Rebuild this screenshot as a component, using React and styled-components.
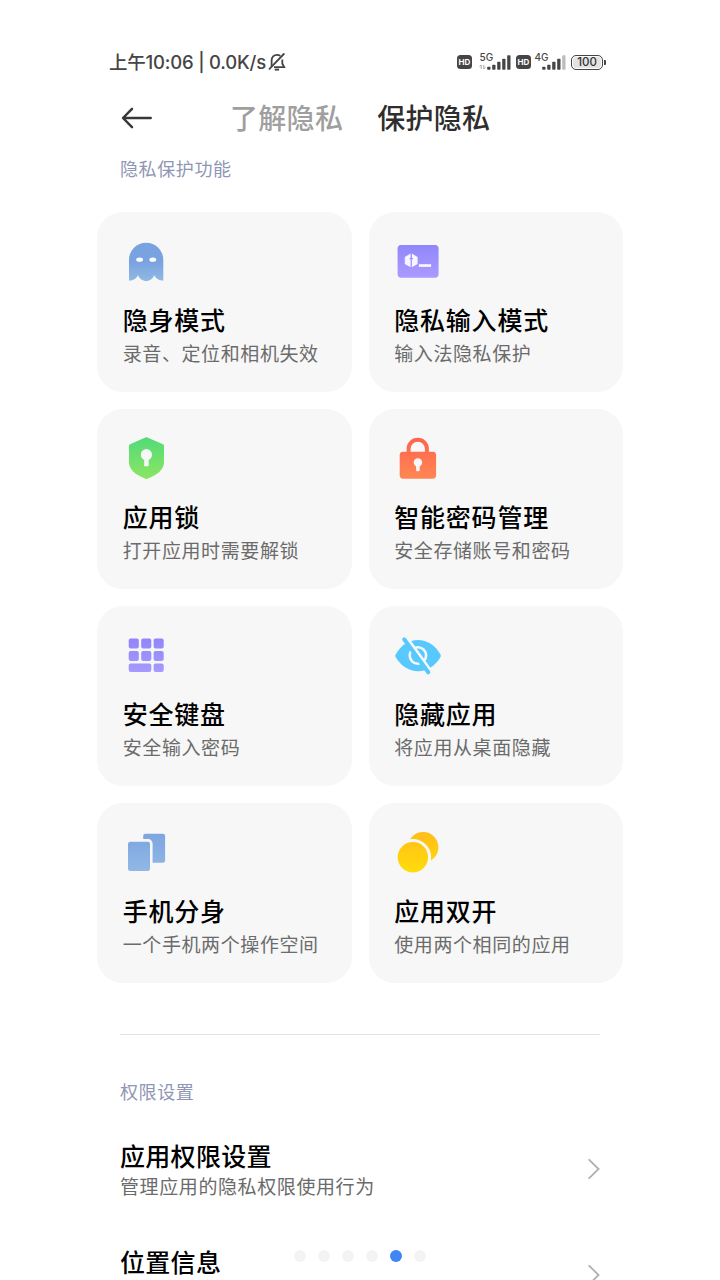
import styled, { createGlobalStyle } from 'styled-components';

const CARD_BG = '#f7f7f7';

const GlobalStyle = createGlobalStyle`
  * {
    box-sizing: border-box;
  }

  body {
    margin: 0;
    background: #fff;
    font-family: 'Noto Sans CJK SC', sans-serif;
  }
`;

const Gradient = ({ id, from, to, y1 = 5, y2 = 44 }) => (
  <defs>
    <linearGradient id={id} gradientUnits="userSpaceOnUse" x1="0" y1={y1} x2="0" y2={y2}>
      <stop offset="0" stopColor={from} />
      <stop offset="1" stopColor={to} />
    </linearGradient>
  </defs>
);

const GhostIcon = () => (
  <Icon viewBox="0 0 48 48">
    <Gradient id="ghost" from="#79a2e0" to="#90b9e4" y1={24} />
    <path
      fill="url(#ghost)"
      d="M7 22.8a17.15 17.15 0 0 1 34.3 0V43.5C37 43.5 33.5 41.5 32.3 38 31 41.5 28 44 24.2 44S17.3 41.5 16 38C14.8 41.5 11.5 43.5 7 43.5Z"
    />
    <ellipse cx="17.6" cy="22.7" rx="3.4" ry="2.1" fill="#fff" />
    <ellipse cx="30.8" cy="22.7" rx="3.4" ry="2.1" fill="#fff" />
  </Icon>
);

const PrivateInputIcon = () => (
  <Icon viewBox="0 0 48 48">
    <Gradient id="privateInput" from="#9087fb" to="#ab9bff" y1={8} y2={41} />
    <rect x="4.6" y="8" width="41" height="32.7" rx="3.6" fill="url(#privateInput)" />
    <path d="M17.6 16.6v4.3h-1v1.4h1v8L11.8 27v-7.1ZM18.9 16.6l5.7 3.3V27l-5.7 3.3v-8h1v-1.4h-1Z" fill="#f7f5ff" />
    <rect x="25.9" y="27.2" width="12.2" height="2.7" fill="#f7f5ff" />
  </Icon>
);

const ShieldIcon = () => (
  <Icon viewBox="0 0 48 48">
    <Gradient id="shield" from="#55db78" to="#8ae563" />
    <path
      fill="url(#shield)"
      d="M23.4 3.6q1-.5 2 0L41 10.3q1 .4 1 1.5V28c0 7.2-5.6 12.3-16.6 16.8q-1 .4-2 0C12.6 40.3 7 35.2 7 28V11.8q0-1.1 1-1.5Z"
    />
    <circle cx="24.4" cy="20.7" r="5.6" fill="#f7f7f7" />
    <rect x="22.2" y="24" width="4.5" height="8.3" rx=".5" fill="#f7f7f7" />
  </Icon>
);

const LockIcon = () => (
  <Icon viewBox="0 0 48 48">
    <Gradient id="lock" from="#ff644d" to="#ff8653" />
    <path d="M15.6 20v-5.1a9.15 9.15 0 0 1 18.3 0V20" fill="none" stroke="url(#lock)" strokeWidth="4" />
    <rect x="6.7" y="17.7" width="36.4" height="27" rx="3.4" fill="url(#lock)" />
    <circle cx="24.9" cy="28.5" r="4.2" fill="#f7f7f7" />
    <rect x="23.1" y="31" width="3.6" height="6.3" rx="1" fill="#f7f7f7" />
  </Icon>
);

const KeypadIcon = () => (
  <Icon viewBox="0 0 48 48">
    <Gradient id="keypad" from="#8f84fa" to="#a99bff" />
    <g fill="url(#keypad)">
      {[6.7, 19.2, 31.6].map((x) => (
        <rect key={x} x={x} y="7.4" width="10.1" height="10.1" rx="2" />
      ))}
      {[6.7, 19.2, 31.6].map((x) => (
        <rect key={x} x={x} y="20" width="10.1" height="10" rx="2" />
      ))}
      <rect x="6.7" y="32.4" width="22.6" height="8.6" rx="2" />
      <rect x="31.6" y="32.4" width="10.1" height="8.6" rx="2" />
    </g>
  </Icon>
);

const HiddenEyeIcon = () => (
  <Icon viewBox="0 0 48 48">
    <path
      d="M2.6 23.4C7.9 14.5 15.9 9.1 25 9.1s17.2 5.4 22.5 14.3q.7 1.3 0 2.6C42.2 34.9 34.1 40.3 25 40.3S7.9 34.9 2.6 26q-.7-1.3 0-2.6Z"
      fill="#58c9ff"
    />
    <circle cx="24.9" cy="24.5" r="8.2" fill="none" stroke={CARD_BG} strokeWidth="2.6" />
    <path d="m13.5 6.2 25.2 34.9" stroke={CARD_BG} strokeWidth="3.2" />
    <path d="m11.200 8.300 24.100 33" stroke="#58c9ff" strokeWidth="4" strokeLinecap="round" />
  </Icon>
);

const ClonePhoneIcon = () => (
  <Icon viewBox="0 0 48 48">
    <Gradient id="phone" from="#7ca5e2" to="#92b8e3" />
    <rect x="21.2" y="5.7" width="21.9" height="29" rx="2.2" fill="url(#phone)" />
    <rect x="3.2" y="11.1" width="27.4" height="34.6" rx="4.5" fill={CARD_BG} />
    <rect x="6" y="13.8" width="22" height="29.2" rx="2.2" fill="url(#phone)" />
  </Icon>
);

const DualAppIcon = () => (
  <Icon viewBox="0 0 48 48">
    <Gradient id="dual" from="#ffbe18" to="#ffdc0c" />
    <circle cx="30.1" cy="19.3" r="15.3" fill="url(#dual)" />
    <circle cx="19.9" cy="29.3" r="18.2" fill={CARD_BG} />
    <circle cx="19.9" cy="29.3" r="15.2" fill="url(#dual)" />
  </Icon>
);

const features = [
  { title: '隐身模式', desc: '录音、定位和相机失效', icon: GhostIcon },
  { title: '隐私输入模式', desc: '输入法隐私保护', icon: PrivateInputIcon },
  { title: '应用锁', desc: '打开应用时需要解锁', icon: ShieldIcon },
  { title: '智能密码管理', desc: '安全存储账号和密码', icon: LockIcon },
  { title: '安全键盘', desc: '安全输入密码', icon: KeypadIcon },
  { title: '隐藏应用', desc: '将应用从桌面隐藏', icon: HiddenEyeIcon },
  { title: '手机分身', desc: '一个手机两个操作空间', icon: ClonePhoneIcon },
  { title: '应用双开', desc: '使用两个相同的应用', icon: DualAppIcon },
];

const settings = [
  { title: '应用权限设置', desc: '管理应用的隐私权限使用行为' },
  { title: '位置信息', desc: '' },
];

const MutedBell = () => (
  <svg width="18" height="20" viewBox="0 0 18 20" fill="none" stroke="#454545" strokeWidth="1.8">
    <path d="M3.6 14.2V8.5C3.6 5 5.9 2.8 9 2.8c1.3 0 2.4.4 3.3 1.1M14.3 7.5v4.3l1.9 3.3H6" />
    <path d="M1.5 16.8 15.8 2" strokeLinecap="round" />
    <path d="M6.700 17.600h4.400" strokeWidth="2" />
  </svg>
);

const Signal = ({ label, level, data }) => (
  <svg width="32" height="20" viewBox="0 0 32 20">
    <SignalLabel x="0.5" y="9">{label}</SignalLabel>
    {data && <path d="M2.2 17v-4l-1.7 1.5M4.8 13v4l1.7-1.5" fill="none" stroke="#aaa" strokeWidth="1" />}
    {[3, 5, 8, 11, 14.5].map((h, i) => (
      <rect key={h} x={8.2 + i * 5} y={17.7 - h} width="3.3" height={h} rx=".8" fill={i < level ? '#454545' : '#bcbcbc'} />
    ))}
  </svg>
);

const App = () => {
  return (
    <Page>
      <GlobalStyle />
      <StatusBar>
        <Clock>
          <span>上午10:06 | 0.0K/s</span>
          <MutedBell />
        </Clock>
        <Indicators>
          <SimStatus $gap="7px">
            <HdBadge>HD</HdBadge>
            <Signal label="5G" level={5} data />
          </SimStatus>
          <SimStatus $gap="3px">
            <HdBadge>HD</HdBadge>
            <Signal label="4G" level={4} />
          </SimStatus>
          <Battery>100</Battery>
        </Indicators>
      </StatusBar>

      <NavBar>
        <BackIcon viewBox="0 0 32 24">
          <path d="M29.7 12H2.5M11 2.8 2 12l9 9.2" />
        </BackIcon>
        <Tabs>
          <Tab>了解隐私</Tab>
          <Tab $active>保护隐私</Tab>
        </Tabs>
      </NavBar>

      <SectionLabel>隐私保护功能</SectionLabel>
      <CardGrid>
        {features.map(({ title, desc, icon: FeatureIcon }) => (
          <Card key={title}>
            <FeatureIcon />
            <CardTitle>{title}</CardTitle>
            <Desc>{desc}</Desc>
          </Card>
        ))}
      </CardGrid>

      <Divider />

      <SectionLabel>权限设置</SectionLabel>
      <SettingList>
        {settings.map(({ title, desc }) => (
          <SettingRow key={title}>
            <div>
              <SettingTitle>{title}</SettingTitle>
              <Desc>{desc}</Desc>
            </div>
            <Chevron viewBox="0 0 14 22">
              <path d="m3.2 1.8 9.4 9.2-9.4 9.2" />
            </Chevron>
          </SettingRow>
        ))}
      </SettingList>

      <Pager>
        {[0, 1, 2, 3, 4, 5].map((i) => (
          <Dot key={i} $active={i === 4} />
        ))}
      </Pager>
    </Page>
  );
};

const Page = styled.div`
  position: relative;
  width: 720px;
  height: 1280px;
  padding-top: 46px;
  overflow: hidden;
  background: #fff;
`;

const StatusBar = styled.div`
  display: flex;
  justify-content: space-between;
  align-items: center;
  height: 32px;
  padding: 0 117px 0 109px;
  color: #454545;
`;

const Clock = styled.div`
  display: flex;
  align-items: center;
  gap: 2px;
  font-family: Inter, 'Noto Sans CJK SC', sans-serif;
  font-size: 18.5px;
  font-weight: 500;
  letter-spacing: -0.2px;
  line-height: 32px;
  white-space: nowrap;
`;

const Indicators = styled.div`
  display: flex;
  align-items: center;
  gap: 5px;
`;

const SimStatus = styled.div`
  display: flex;
  align-items: center;
  gap: ${({ $gap }) => $gap};
`;

const HdBadge = styled.span`
  display: flex;
  justify-content: center;
  align-items: center;
  width: 15px;
  height: 14px;
  border-radius: 3.5px;
  background: #454545;
  color: #fff;
  font-family: Inter, sans-serif;
  font-size: 8px;
  font-weight: 700;
`;

const SignalLabel = styled.text`
  font-family: Inter, sans-serif;
  font-size: 10px;
  font-weight: 500;
  fill: #454545;
`;

const Battery = styled.span`
  position: relative;
  display: flex;
  justify-content: center;
  align-items: center;
  width: 32px;
  height: 15px;
  border: 1.5px solid #454545;
  border-radius: 5px;
  background: #e3e3e3;
  box-shadow: inset 0 0 0 1px #fff;
  color: #333;
  font-family: Inter, sans-serif;
  font-size: 11.5px;
  font-weight: 500;

  &::after {
    content: '';
    position: absolute;
    right: -4px;
    width: 2px;
    height: 5px;
    border-radius: 0 1px 1px 0;
    background: #454545;
  }
`;

const NavBar = styled.div`
  display: flex;
  align-items: center;
  height: 80px;
  padding-left: 121px;
`;

const BackIcon = styled.svg`
  width: 32px;
  height: 24px;
  fill: none;
  stroke: #383838;
  stroke-width: 2.5;
  stroke-linecap: round;
  stroke-linejoin: round;
`;

const Tabs = styled.div`
  display: flex;
  gap: 34px;
  margin-left: 77px;
  padding-bottom: 2px;
`;

const Tab = styled.span`
  color: ${({ $active }) => ($active ? '#2e2e2e' : '#9f9f9f')};
  font-size: 28px;
  font-weight: 500;
  letter-spacing: 0.3px;
  line-height: 40px;
`;

const SectionLabel = styled.h2`
  margin: -2px 0 0;
  padding: 0 120px;
  color: #8f96b5;
  font-size: 18px;
  font-weight: 400;
  letter-spacing: 0.6px;
  line-height: 24px;
`;

const CardGrid = styled.div`
  display: grid;
  grid-template-columns: 1fr 1fr;
  gap: 17px;
  padding: 32px 97px 0;
`;

const Card = styled.div`
  display: flex;
  flex-direction: column;
  height: 180px;
  padding: 25px 25px 25px 25.7px;
  border-radius: 26px;
  background: ${CARD_BG};
`;

const Icon = styled.svg`
  width: 48px;
  height: 48px;
  margin: 0 0 16px -1px;
`;

const CardTitle = styled.h3`
  margin: 0 0 2px;
  color: #000;
  font-size: 25px;
  font-weight: 500;
  letter-spacing: 0.8px;
  line-height: 36px;
  white-space: nowrap;
`;

const Desc = styled.p`
  margin: 0;
  color: #6b6b6b;
  font-size: 19px;
  font-weight: 400;
  letter-spacing: 0.6px;
  line-height: 28px;
  white-space: nowrap;
`;

const Divider = styled.hr`
  height: 1px;
  margin: 51px 120px 46px;
  border: none;
  background: #e3e3e3;
`;

const SettingList = styled.div`
  padding: 1px 120px 0;
`;

const SettingRow = styled.div`
  display: flex;
  justify-content: space-between;
  align-items: center;
  height: 106px;
  padding-top: 24px;

  & > div {
    height: 60px;
  }
`;

const SettingTitle = styled(CardTitle)`
  margin: 0 0 1px;
  letter-spacing: 0.3px;
  line-height: 32px;
`;

const Chevron = styled.svg`
  width: 14px;
  height: 22px;
  fill: none;
  stroke: #b0b0b0;
  stroke-width: 1.8;
  stroke-linecap: round;
`;

const Pager = styled.div`
  position: absolute;
  left: 294px;
  bottom: 18px;
  display: flex;
  gap: 12px;
`;

const Dot = styled.span`
  width: 12px;
  height: 12px;
  border-radius: 50%;
  background: ${({ $active }) => ($active ? '#4285f4' : '#f3f3f3')};
`;

export default App;
